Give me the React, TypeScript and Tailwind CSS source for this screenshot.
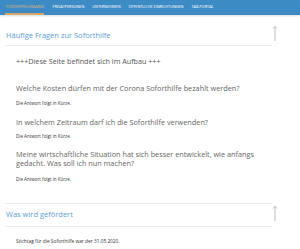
const navItems = ["Förderprogramme", "Privatpersonen", "Unternehmen", "Öffentliche Einrichtungen", "TAB-Portal"];

function UpArrow({ className }: { className?: string }) {
  return (
    <svg width="6" height="16" viewBox="0 0 6 16" fill="none" className={className}>
      <path d="M3 1.5V16" stroke="#b5b5b5" strokeWidth="0.9" />
      <path d="M1 3.5L3 1.2L5 3.5" stroke="#b5b5b5" strokeWidth="0.8" />
    </svg>
  );
}

function SectionHeader({ title, top }: { title: string; top?: boolean }) {
  return (
    <div className="flex items-start">
      <div
        className={`ml-[5px] w-[267px] border-b border-[#ececec] ${top ? "pt-[14px] pb-[4px]" : "border-t pt-[4px] pb-[6px]"}`}
      >
        <h2 className="pl-[1px] text-[7.5px] leading-[12px] text-[#5aa0d5]">{title}</h2>
      </div>
      <UpArrow className={top ? "mt-[10px]" : "mt-[2px]"} />
    </div>
  );
}

export default function App() {
  return (
    <div className="w-[300px] h-[249px] overflow-hidden bg-white font-['Open_Sans',sans-serif]">
      {/* Nav */}
      <nav className="relative flex h-[15px] items-start gap-[8px] bg-[#3d8bc4] pl-[6px] shadow-[0_1px_2px_rgba(0,0,0,0.15)]">
        {navItems.map((item, i) => (
          <div key={item} className="relative h-full">
            <span
              className={`block pt-[4px] text-[3.9px] leading-[5px] uppercase tracking-[-0.07px] ${
                i === 0 ? "text-[#d8b283]" : "text-white"
              }`}
            >
              {item}
            </span>
            {i === 0 && <div className="absolute left-[-1px] right-0 bottom-0 h-[2px] bg-[#d6a66a]" />}
          </div>
        ))}
      </nav>

      <SectionHeader title="Häufige Fragen zur Soforthilfe" top />

      <div className="pl-[16px] text-[#555]">
        <p className="mt-[10px] text-[7.2px] leading-[10px]">+++Diese Seite befindet sich im Aufbau +++</p>

        <h3 className="mt-[17px] text-[7.3px] leading-[10px] text-[#666]">
          Welche Kosten dürfen mit der Corona Soforthilfe bezahlt werden?
        </h3>
        <p className="mt-[7px] text-[4.5px] leading-[6px] text-[#333]">Die Antwort folgt in Kürze.</p>

        <h3 className="mt-[11px] text-[7.3px] leading-[10px] text-[#666]">
          In welchem Zeitraum darf ich die Soforthilfe verwenden?
        </h3>
        <p className="mt-[6px] text-[4.5px] leading-[6px] text-[#333]">Die Antwort folgt in Kürze.</p>

        <h3 className="mt-[11px] w-[260px] text-[7.3px] leading-[9px] text-[#666]">
          Meine wirtschaftliche Situation hat sich besser entwickelt, wie anfangs gedacht. Was soll ich nun machen?
        </h3>
        <p className="mt-[8px] text-[4.5px] leading-[6px] text-[#333]">Die Antwort folgt in Kürze.</p>
      </div>

      <div className="mt-[21px]">
        <SectionHeader title="Was wird gefördert" />
      </div>

      <p className="mt-[11px] pl-[16px] text-[4.8px] leading-[6px] text-[#333]">
        Stichtag für die Soforthilfe war der 31.05.2020.
      </p>
    </div>
  );
}
